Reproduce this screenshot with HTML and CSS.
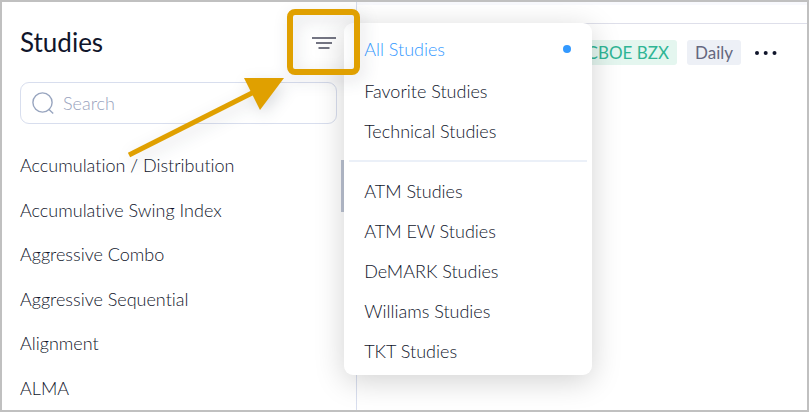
FILE: index.html
```html
<!DOCTYPE html>
<html lang="en">
<head>
<meta charset="utf-8">
<title>Studies</title>
<link rel="stylesheet" href="styles.css">
</head>
<body>
<div class="app">
  <aside class="sidebar">
    <header class="sidebar-header">
      <h1 class="title">Studies</h1>
      <div class="filter">
        <button class="filter-button" type="button" aria-label="Filter studies">
          <svg width="24" height="14" viewBox="0 0 24 14" fill="none" stroke="#484a5c" stroke-width="1.7"><path d="M0 2h24M4 7h16M6.500 12h11"/></svg>
        </button>
        <div class="menu">
          <ul class="menu-group">
            <li><button class="menu-item active" type="button">All Studies<span class="dot"></span></button></li>
            <li><button class="menu-item" type="button">Favorite Studies</button></li>
            <li><button class="menu-item" type="button">Technical Studies</button></li>
          </ul>
          <hr class="menu-divider">
          <ul class="menu-group">
            <li><button class="menu-item" type="button">ATM Studies</button></li>
            <li><button class="menu-item" type="button">ATM EW Studies</button></li>
            <li><button class="menu-item" type="button">DeMARK Studies</button></li>
            <li><button class="menu-item" type="button">Williams Studies</button></li>
            <li><button class="menu-item" type="button">TKT Studies</button></li>
          </ul>
        </div>
      </div>
    </header>
    <label class="search">
      <svg class="search-icon" width="22" height="22" viewBox="0 0 22 22" fill="none" stroke="#98a5bf" stroke-width="1.4"><circle cx="10.5" cy="10.5" r="9.6"/><path d="M16.5 17l4.700 4.500"/></svg>
      <input class="search-input" type="text" placeholder="Search" aria-label="Search">
    </label>
    <ul class="studies">
      <li>Accumulation / Distribution</li>
      <li>Accumulative Swing Index</li>
      <li>Aggressive Combo</li>
      <li>Aggressive Sequential</li>
      <li>Alignment</li>
      <li>ALMA</li>
    </ul>
    <div class="scroll-thumb"></div>
  </aside>
  <main class="chart">
    <div class="chart-top"></div>
    <div class="chart-bar">
      <span class="tag exchange">CBOE BZX</span>
      <span class="tag interval">Daily</span>
      <button class="more" type="button" aria-label="More options">
        <svg width="22" height="4" viewBox="0 0 22 4" fill="#10152b"><circle cx="2" cy="2" r="2"/><circle cx="10.700" cy="2" r="2"/><circle cx="19.500" cy="2" r="2"/></svg>
      </button>
    </div>
  </main>
  <svg class="callout" width="260" height="180" viewBox="0 0 260 180" fill="none" stroke="#e0a000">
    <rect x="188" y="10" width="67" height="60" rx="5" stroke-width="6"/>
    <path d="M27 153L152 90" stroke-width="5"/>
    <path d="M142 76h40L158 108z" fill="#e0a000" stroke="none"/>
  </svg>
</div>
</body>
</html>
```
FILE: styles.css
```css
* {
  box-sizing: border-box;
}

body {
  margin: 0;
  font-family: Lato, "Liberation Sans", sans-serif;
  font-size: 18px;
  font-weight: 300;
  font-variant-ligatures: none;
  line-height: 20px;
  color: #10152b;
}

button {
  padding: 0;
  border: 0;
  background: none;
  color: inherit;
  font: inherit;
  text-align: left;
}

ul {
  margin: 0;
  padding: 0;
  list-style: none;
}

.app {
  position: relative;
  display: grid;
  grid-template-columns: minmax(280px, 44%) 1fr;
  height: 100vh;
  overflow: hidden;
  border: 2px solid #c0c0c0;
  background: #fff;
}

.sidebar {
  position: relative;
  display: flex;
  flex-direction: column;
  padding: 24px 19px 0 18px;
  box-shadow: 1px 0 #d8deee;
}

.sidebar-header {
  display: flex;
  align-items: center;
  justify-content: space-between;
  height: 34px;
  padding-right: 1px;
}

.title {
  margin: 0;
  font-size: 26px;
  font-weight: 400;
  line-height: 32px;
  padding-bottom: 2px;
}

.filter {
  position: relative;
}

.filter-button {
  display: flex;
}

.menu {
  position: absolute;
  z-index: 2;
  top: -13px;
  left: 32px;
  width: 248px;
  padding: 4px 0;
  border-radius: 9px;
  background: #fff;
  box-shadow: 0 6px 30px rgba(0, 0, 0, 0.18);
}

.menu-item {
  display: flex;
  align-items: center;
  justify-content: space-between;
  width: 100%;
  height: 40px;
  padding: 0 21px 0 20px;
}

.menu-item.active {
  height: 44px;
  color: #3399ff;
}

.dot {
  width: 8px;
  height: 8px;
  border-radius: 50%;
  background: #3399ff;
}

.menu-divider {
  height: 2px;
  margin: 9px 5px;
  border: 0;
  background: #ebf0f8;
}

.search {
  display: flex;
  align-items: center;
  gap: 9px;
  height: 42px;
  margin-top: 22px;
  padding: 0 11px;
  border: 1px solid #d8deee;
  border-radius: 9px;
}

.search-icon {
  flex: none;
}

.search-input {
  flex: 1;
  min-width: 0;
  padding: 0;
  border: 0;
  outline: 0;
  background: none;
  font: inherit;
}

.search-input::placeholder {
  color: #98a2bd;
}

.studies {
  display: grid;
  flex: 1;
  grid-auto-rows: 1fr;
  align-items: center;
  margin-top: 19px;
}

.scroll-thumb {
  position: absolute;
  top: 158px;
  right: 10px;
  width: 5px;
  height: 52px;
  background: #bcc3d3;
}

.chart-top {
  height: 22px;
  border-top: 3px solid #f8f9fd;
  border-bottom: 1px solid #dedfea;
}

.chart-bar {
  display: flex;
  align-items: center;
  justify-content: flex-end;
  gap: 10px;
  padding: 16px 30px 0 0;
}

.tag {
  height: 25px;
  padding: 0 8px;
  border-radius: 3px;
  font-size: 17px;
  font-weight: 400;
  line-height: 25px;
}

.exchange {
  background: #e4f6ef;
  color: #2fb595;
}

.interval {
  background: #edf0f6;
  color: #65677f;
}

.more {
  display: flex;
  margin-left: 4px;
}

.callout {
  position: absolute;
  z-index: 3;
  top: 0;
  left: 100px;
  filter: drop-shadow(3px 5px 8px rgba(20, 30, 50, 0.16));
  pointer-events: none;
}
```
